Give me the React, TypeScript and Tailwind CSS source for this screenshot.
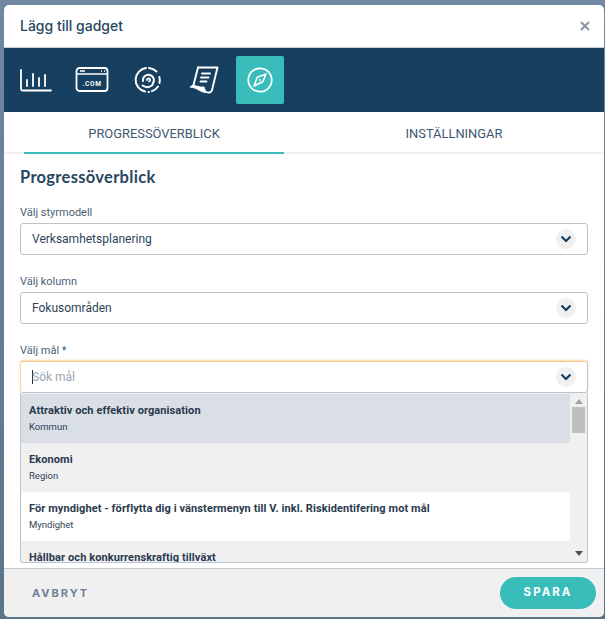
import React from "react";

const ChevronBadge = () => (
  <span className="flex h-5 w-5 items-center justify-center rounded-full bg-[#f0f0f0]">
    <svg width="12" height="8" viewBox="0 0 12 8" fill="none">
      <path d="M1.5 1.5 6 6l4.5-4.5" stroke="#163f60" strokeWidth="2.2" />
    </svg>
  </span>
);

const Field = ({ label, value }: { label: string; value: string }) => (
  <div className="flex flex-col">
    <label className="h-[21px] text-[11px] leading-[22px] text-[#4a5f75]">{label}</label>
    <div className="flex h-[32px] items-center justify-between rounded-[3px] border border-[#b8c4ce] pl-[11px] pr-[11px] text-[12px] text-[#2f4358]">
      <span>{value}</span>
      <ChevronBadge />
    </div>
  </div>
);

const Option = ({ title, sub, bg }: { title: string; sub: string; bg: string }) => (
  <div className={`h-[49px] shrink-0 px-2 pt-[9px] ${bg}`}>
    <div className="text-[11px] font-bold leading-[16px] tracking-[0.09px] text-[#2a3a4e]">{title}</div>
    <div className="mt-[1px] text-[9.5px] leading-[14px] text-[#2f4358]">{sub}</div>
  </div>
);

export default function App() {
  return (
    <div className="h-[619px] w-[605px] overflow-hidden bg-gradient-to-b from-[#7088a0] to-[#5a7488] pl-[4px] pt-[5px] font-['Roboto',sans-serif]">
      <div className="flex h-[612px] w-[600px] flex-col overflow-hidden rounded-[5px] bg-white">
        <header className="flex h-[43px] shrink-0 items-center justify-between border-b border-[#c5ccd3] pl-4 pr-[14px]">
          <h2 className="pb-[2px] font-['Inter',sans-serif] text-[14px] font-medium text-[#274660]">Lägg till gadget</h2>
          <svg width="10" height="10" viewBox="0 0 10 10" fill="none">
            <path d="M1 1l8 8M9 1l-8 8" stroke="#8796a5" strokeWidth="2" />
          </svg>
        </header>

        <div className="flex h-[64px] shrink-0 items-center bg-[#163f60] pl-2">
          <div className="flex h-12 w-12 items-center justify-center">
            <svg width="32" height="24" viewBox="0 0 32 24" fill="none" stroke="white" strokeWidth="1.8" strokeLinecap="round">
              <path d="M1 2v19a1.5 1.5 0 0 0 1.5 1.5H31" />
              <path d="M7 12v6M13 6v12M19 10v8M25 7v11" />
            </svg>
          </div>
          <div className="ml-2 flex h-12 w-12 items-center justify-center">
            <svg width="34" height="26" viewBox="0 0 34 26" fill="none" stroke="white">
              <rect x="1.5" y="1" width="31" height="23" rx="3" strokeWidth="1.8" />
              <path d="M1.5 7h31" strokeWidth="1.4" />
              <path d="M5 4h5M26 4h1M29 4h1" strokeWidth="1.3" />
              <text x="17" y="18.5" textAnchor="middle" fill="white" stroke="none" fontSize="6.5" fontWeight="700" letterSpacing="0.7" fontFamily="Roboto, sans-serif">.COM</text>
            </svg>
          </div>
          <div className="ml-2 flex h-12 w-12 items-center justify-center">
            <svg width="28" height="28" viewBox="0 0 28 28" fill="none" stroke="white" strokeLinecap="round">
              <path d="M12 2a12 12 0 0 0-1 23.6" strokeWidth="2" />
              <path d="M15 2a12 12 0 0 1 7.5 3.5" strokeWidth="2" />
              <path d="M25.3 11a12 12 0 0 1 .2 6M24 20.5a12 12 0 0 1-6 4.6M14.5 26h.5" strokeWidth="2" />
              <path d="M9 15a5.5 5.5 0 1 1 9.5 3" strokeWidth="2" />
              <path d="M8.5 19.5c3 2 7 2 10-.5" strokeWidth="2" />
              <path d="M13 14a1.6 1.6 0 1 1 2 1.5" strokeWidth="1.8" />
            </svg>
          </div>
          <div className="ml-2 flex h-12 w-12 items-center justify-center">
            <svg width="30" height="28" viewBox="0 0 30 28" fill="none" stroke="white" strokeLinecap="round" strokeLinejoin="round">
              <path d="M9 1.5h19.5L23 24c-.5 2-2.5 3-4 2.5" strokeWidth="1.9" />
              <path d="M9 1.5 4.5 19" strokeWidth="1.9" />
              <path d="M1.5 21c1-1.6 2.5-2 4-1.5 3 .8 6 2 9.5 1.5.5 2.5 2 5 4 5.5-3.5.5-7-1-10-3-2.5-1.5-5-2-7.5-2.5z" fill="white" strokeWidth="1" />
              <path d="M13 7.5h8M12 11.5h7.5M11.5 15.5h6" strokeWidth="1.9" />
            </svg>
          </div>
          <div className="ml-2 flex h-12 w-12 items-center justify-center rounded-[2px] bg-[#38bdbb]">
            <svg width="26" height="26" viewBox="0 0 26 26" fill="none" stroke="white">
              <circle cx="13" cy="13" r="11.7" strokeWidth="1.8" />
              <path d="M19 7l-3.2 7.8L7 19l3.2-8.8z" strokeWidth="1.6" strokeLinejoin="round" />
              <circle cx="13" cy="13" r="1" fill="white" stroke="none" />
            </svg>
          </div>
        </div>

        <nav className="flex h-[42px] shrink-0 border-b-2 border-[#f0f0f0] pl-5 text-[12.9px] text-[#3f5870]">
          <div className="flex h-[42px] w-[260px] items-center justify-center border-b-2 border-[#38bdbb] pt-[3px]">PROGRESSÖVERBLICK</div>
          <div className="ml-5 flex h-[40px] w-[300px] items-center justify-center pt-[3px]">INSTÄLLNINGAR</div>
        </nav>

        <main className="flex min-h-0 flex-1 flex-col px-4">
          <h3 className="mt-[13px] h-[19px] font-['Lato',sans-serif] text-[16.5px] font-bold leading-[20px] tracking-[0.3px] text-[#274660]">Progressöverblick</h3>
          <div className="mt-[16px] flex flex-col gap-[16px]">
            <Field label="Välj styrmodell" value="Verksamhetsplanering" />
            <Field label="Välj kolumn" value="Fokusområden" />
          </div>
          <label className="mt-[16px] h-[21px] text-[11px] leading-[22px] text-[#4a5f75]">Välj mål *</label>
          <div className="flex h-[32px] shrink-0 items-center justify-between rounded-[3px] border border-[#b8c4ce] border-l-[#f8d9ae] border-t-[#f8c98a] pl-[11px] pr-[11px] shadow-[0_-1px_2px_#f8d9ae]">
            <span className="flex items-center text-[12px] text-[#9aa7b3]">
              <span className="mr-[-1px] h-[14px] w-px bg-[#1f2f3f]" />
              Sök mål
            </span>
            <ChevronBadge />
          </div>
          <div className="flex h-[170px] shrink-0 overflow-hidden rounded-b-[3px] border-x border-b border-t border-[#b8c4ce] border-t-[#f0f0f0] bg-[#f0f0f0]">
            <div className="flex w-[549px] flex-col overflow-hidden">
              <Option title="Attraktiv och effektiv organisation" sub="Kommun" bg="bg-[#dadee5]" />
              <Option title="Ekonomi" sub="Region" bg="bg-[#f0f0f0]" />
              <Option title="För myndighet - förflytta dig i vänstermenyn till V. inkl. Riskidentifering mot mål" sub="Myndighet" bg="bg-white" />
              <Option title="Hållbar och konkurrenskraftig tillväxt" sub="Kommun" bg="bg-[#f0f0f0]" />
            </div>
            <div className="flex w-[17px] flex-col items-center bg-[#f0f0f0]">
              <svg className="mt-[5px]" width="8" height="5" viewBox="0 0 8 5"><path d="M4 0l4 5H0z" fill="#a3a3a3" /></svg>
              <div className="mt-[3px] h-[26px] w-[13px] bg-[#bebebe]" />
              <div className="flex-1" />
              <svg className="mb-[6px]" width="8" height="5" viewBox="0 0 8 5"><path d="M0 0h8L4 5z" fill="#505050" /></svg>
            </div>
          </div>
        </main>

        <footer className="flex h-[49px] shrink-0 items-center justify-between border-t border-[#c5ccd3] bg-[#f0f0f0] pl-[28px] pr-[8px]">
          <span className="font-['Inter',sans-serif] text-[11px] font-bold tracking-[2px] text-[#6c8195]">AVBRYT</span>
          <span className="flex h-[32px] w-[96px] items-center justify-center rounded-full bg-[#38bdbb] font-['Inter',sans-serif] text-[11.5px] font-bold tracking-[2px] text-white">SPARA</span>
        </footer>
      </div>
    </div>
  );
}
